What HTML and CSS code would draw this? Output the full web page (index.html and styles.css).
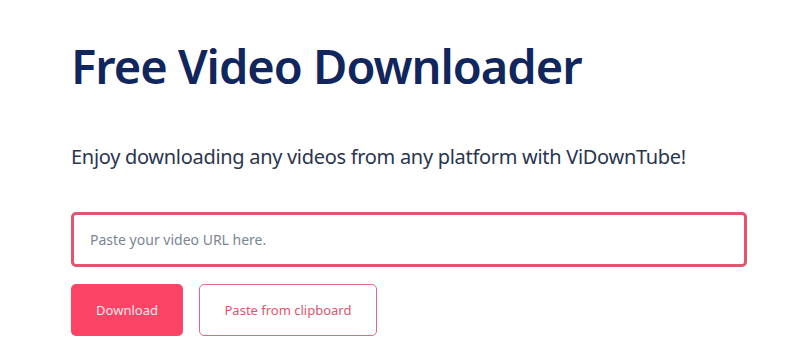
FILE: index.html
```html
<!DOCTYPE html>
<html lang="en">
<head>
<meta charset="utf-8">
<title>Free Video Downloader</title>
<link rel="stylesheet" href="styles.css">
</head>
<body>
<main class="hero">
  <h1 class="title">Free Video Downloader</h1>
  <p class="subtitle">Enjoy downloading any videos from any platform with ViDownTube!</p>
  <form class="form">
    <input class="url-input" type="text" placeholder="Paste your video URL here.">
    <div class="actions">
      <button class="btn btn-primary" type="button">Download</button>
      <button class="btn btn-outline" type="button">Paste from clipboard</button>
    </div>
  </form>
</main>
</body>
</html>
```
FILE: styles.css
```css
html, body {
  margin: 0;
  padding: 0;
  background: #ffffff;
}
body {
  font-family: "Noto Sans", "Open Sans", sans-serif;
}
.hero {
  padding: 34px 60px 0 71px;
  display: flex;
  flex-direction: column;
}
.title {
  margin: 0;
  font-size: 47px;
  font-weight: 600;
  line-height: 64px;
  color: #10265c;
  letter-spacing: -1px;
}
.subtitle {
  margin: 45px 0 0;
  font-size: 20px;
  line-height: 28px;
  color: #2a3550;
  font-weight: 400;
  letter-spacing: -0.3px;
}
.form {
  margin-top: 41px;
  display: flex;
  flex-direction: column;
  gap: 17px;
}
.url-input {
  box-sizing: border-box;
  width: 676px;
  height: 55px;
  border: 3px solid #e05670;
  border-radius: 5px;
  padding: 0 16px;
  font-family: inherit;
  font-size: 14px;
  color: #333;
  outline: none;
}
.url-input::placeholder {
  color: #7b8595;
}
.actions {
  display: flex;
  gap: 16px;
}
.btn {
  box-sizing: border-box;
  height: 52px;
  border-radius: 5px;
  font-family: inherit;
  font-size: 13px;
  cursor: pointer;
}
.btn-primary {
  width: 112px;
  background: #fb4466;
  border: none;
  color: #ffe6ec;
}
.btn-outline {
  width: 178px;
  background: #ffffff;
  border: 1px solid #e06b80;
  color: #e0556e;
}
```
